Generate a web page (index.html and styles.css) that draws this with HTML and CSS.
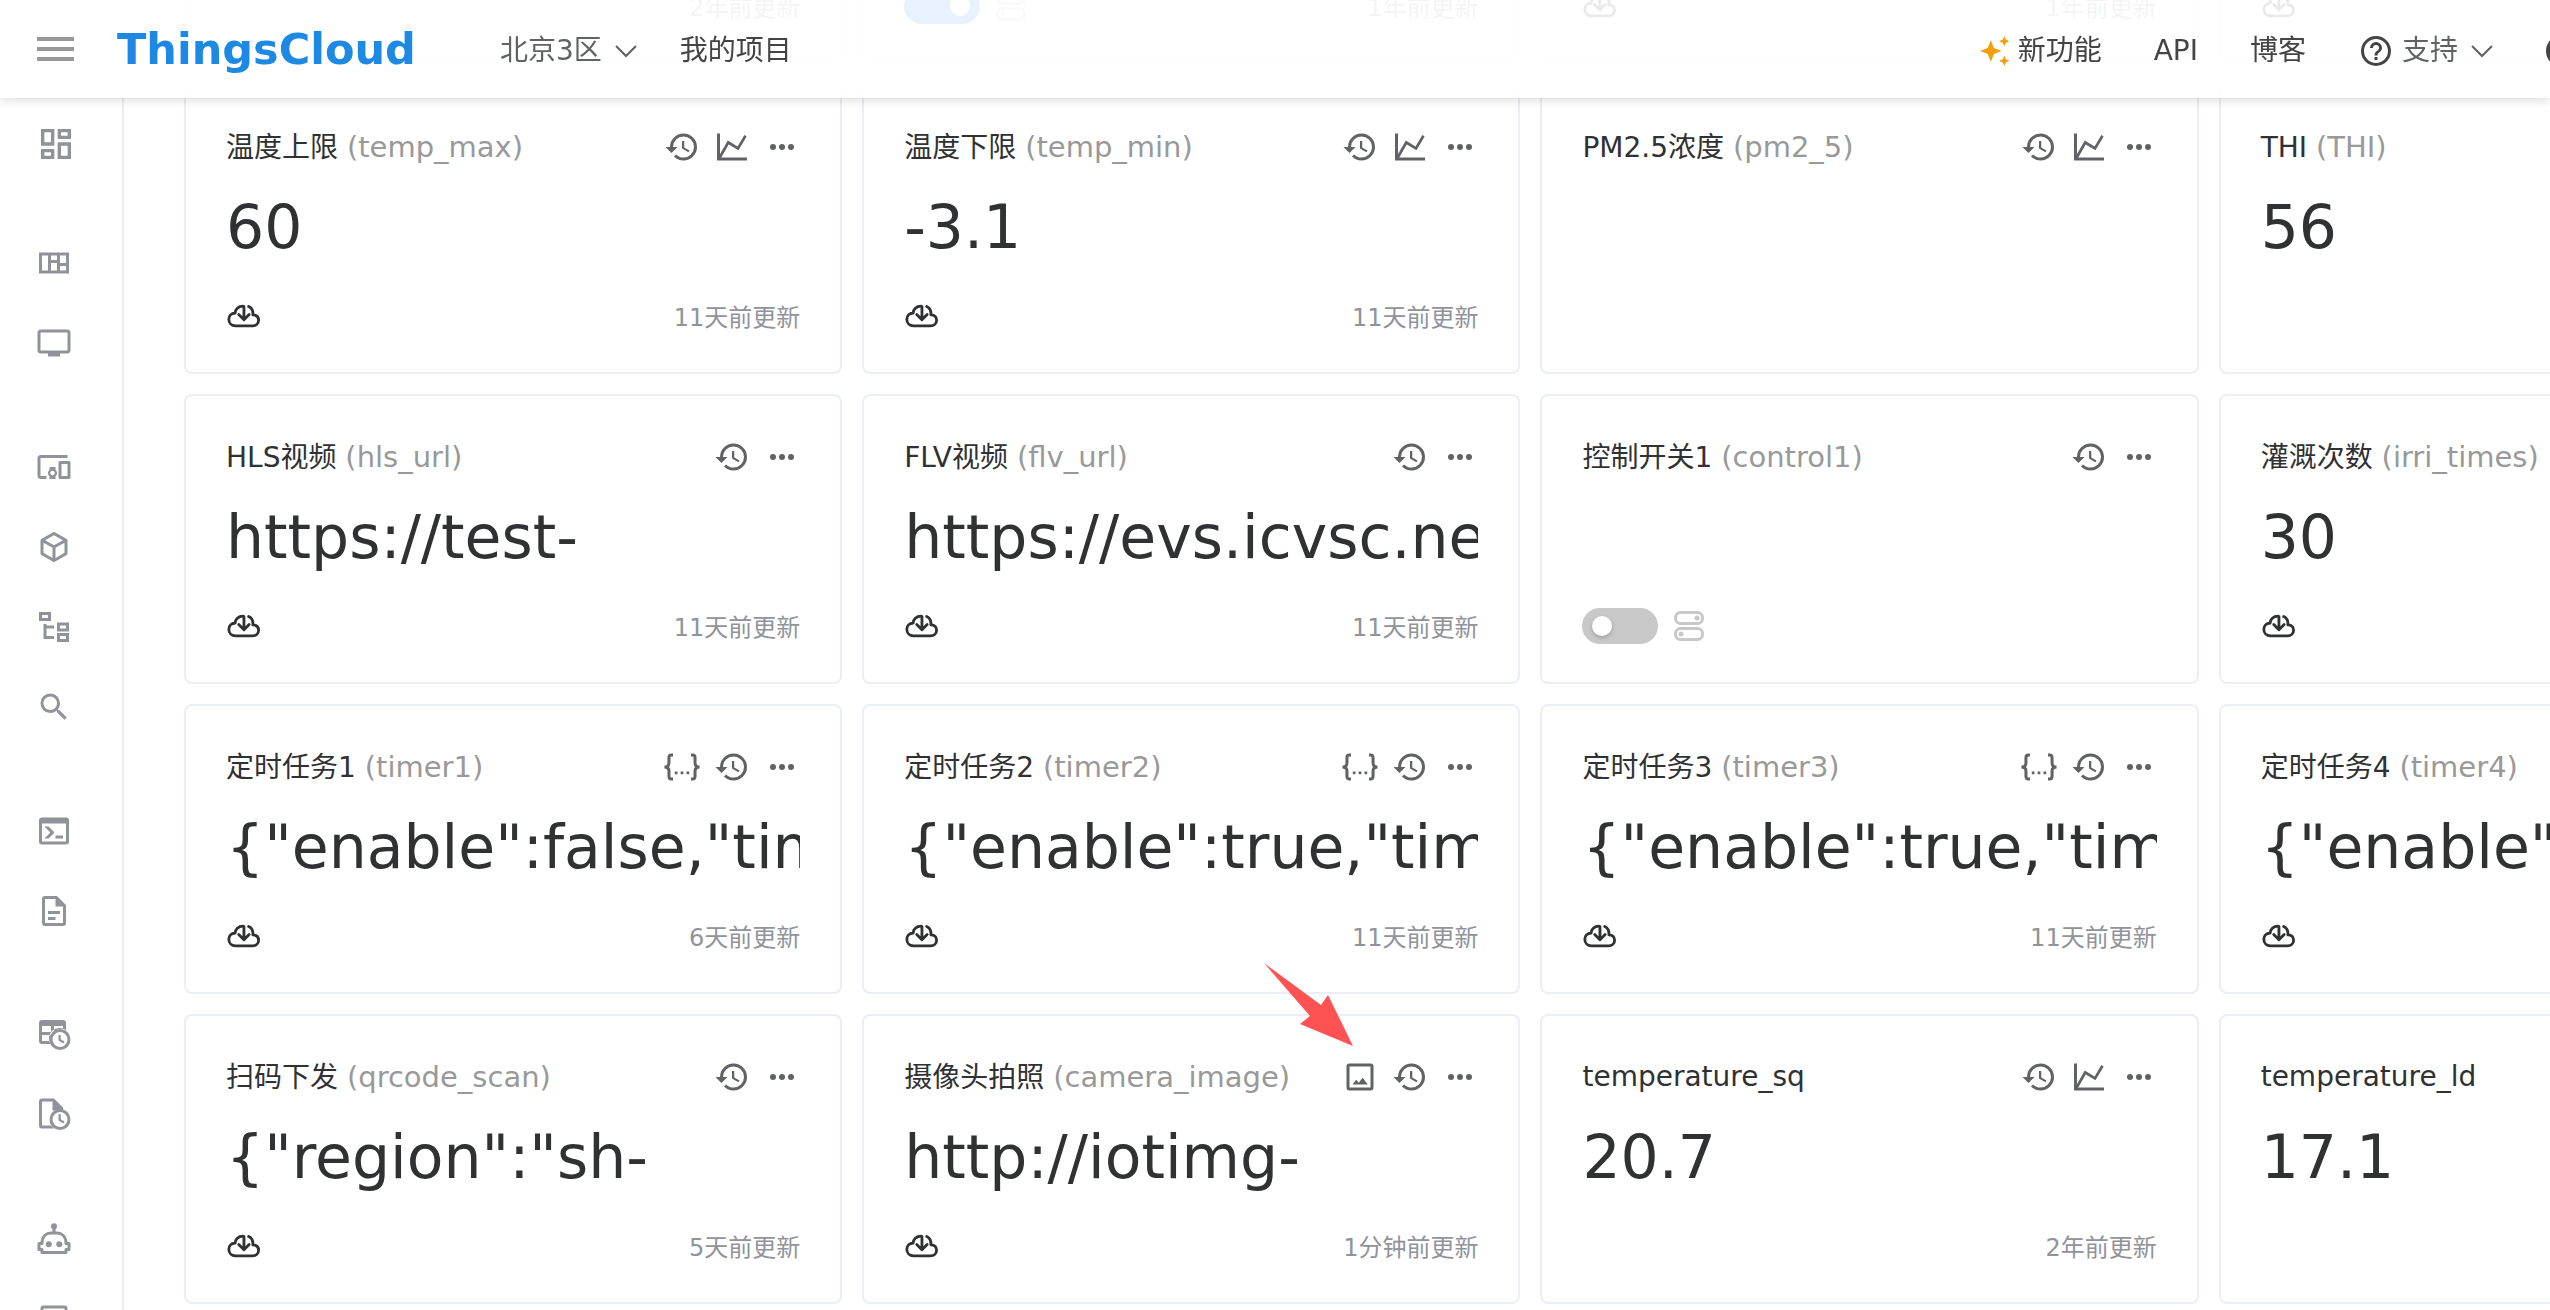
FILE: index.html
```html
<!DOCTYPE html>
<html lang="zh-CN">

<head>
    <meta charset="utf-8">
    <title>ThingsCloud</title>
    <link rel="stylesheet" href="styles.css">
</head>

<body>
    <!-- icon sprite -->
    <svg class="sprite" aria-hidden="true">
        <symbol id="i-history" viewBox="0 0 24 24"><path d="M13.5 8H12v5l4.28 2.54.72-1.21-3.5-2.08V8M13 3a9 9 0 0 0-9 9H1l3.96 4.03L9 12H6a7 7 0 0 1 7-7 7 7 0 0 1 7 7 7 7 0 0 1-7 7c-1.93 0-3.68-.79-4.94-2.06l-1.42 1.42A8.896 8.896 0 0 0 13 21a9 9 0 0 0 9-9 9 9 0 0 0-9-9"/></symbol>
        <symbol id="i-chart" viewBox="0 0 24 24"><path d="M3 3v17H22" fill="none" stroke="currentColor" stroke-width="2"/><path d="M3.500 19.500 9.500 9l6.500 4L21 4.500" fill="none" stroke="currentColor" stroke-width="1.800"/></symbol>
        <symbol id="i-more" viewBox="0 0 24 24"><circle cx="6" cy="12" r="2"/><circle cx="12" cy="12" r="2"/><circle cx="18" cy="12" r="2"/></symbol>
        <symbol id="i-image" viewBox="0 0 24 24"><path d="M19 19H5V5h14m0-2H5a2 2 0 0 0-2 2v14a2 2 0 0 0 2 2h14a2 2 0 0 0 2-2V5a2 2 0 0 0-2-2M7 17l2.400-3.200 1.700 2.100 2.700-3.400L17.200 17z"/></symbol>
        <symbol id="i-json" viewBox="0 0 24 24"><g fill="none" stroke="currentColor" stroke-width="2"><path d="M6 4H5C3.800 4 3.300 4.700 3.300 5.800v3.500C3.300 11 2.500 12 .3 12c2.200 0 3 1 3 2.700v3.500C3.300 19.300 3.800 20 5 20h1M18 4h1c1.200 0 1.700.7 1.700 1.800v3.500c0 1.700.8 2.700 3 2.700-2.200 0-3 1-3 2.700v3.500c0 1.100-.5 1.800-1.700 1.800h-1"/></g><path d="M7.200 15H9v1.800H7.200zM11.100 15h1.800v1.800h-1.800zM15 15h1.800v1.800H15z"/></symbol>
        <symbol id="i-cloud" viewBox="-1 0 36 26"><g fill="none" stroke="currentColor" stroke-width="3" stroke-linecap="round" stroke-linejoin="round"><path d="M17 2.500C12 2.500 8.700 6 8.700 9.800 4.500 10 2 13 2 16.500 2 20.500 5 23.500 9 23.500h18c3.800 0 6.500-2.500 6.500-6 0-3.300-2.300-5.500-6-5.700.3-4-1.500-7.500-4.500-8.800"/><path d="M18 3v13M12.500 11.500 18 17l5.500-5.500"/></g></symbol>
        <symbol id="i-switch" viewBox="0 0 30 30"><g fill="none" stroke="currentColor" stroke-width="3"><rect x="1.500" y="1.500" width="27" height="11" rx="5"/><rect x="1.500" y="17.500" width="27" height="11" rx="5"/></g><circle cx="23" cy="7" r="2.500"/><circle cx="7" cy="23" r="2.500"/></symbol>
        <symbol id="i-chevron" viewBox="0 0 24 24"><path d="M2 7l10 10L22 7" fill="none" stroke="currentColor" stroke-width="2"/></symbol>
        <symbol id="i-help" viewBox="0 0 24 24"><path d="M11 18h2v-2h-2v2m1-16A10 10 0 0 0 2 12a10 10 0 0 0 10 10 10 10 0 0 0 10-10A10 10 0 0 0 12 2m0 18c-4.410 0-8-3.590-8-8s3.590-8 8-8 8 3.590 8 8-3.590 8-8 8m0-14a4 4 0 0 0-4 4h2a2 2 0 0 1 2-2 2 2 0 0 1 2 2c0 2-3 1.750-3 5h2c0-2.250 3-2.500 3-5a4 4 0 0 0-4-4z"/></symbol>
        <symbol id="i-spark" viewBox="0 0 29 29"><path d="M10.500 4l3 7.500 7.500 3-7.500 3-3 7.500-3-7.500-7.500-3 7.500-3zM23.500 0l1.500 3.500L28.500 5 25 6.500 23.500 10 22 6.500 18.500 5 22 3.500zM23.500 19l1.500 3.500 3.500 1.500-3.500 1.500-1.500 3.500-1.500-3.500-3.500-1.500 3.500-1.500z"/></symbol>
        <symbol id="i-dashboard" viewBox="0 0 24 24"><path d="M19 5v2h-4V5h4M9 5v6H5V5h4m10 8v6h-4v-6h4M9 17v2H5v-2h4M21 3h-8v6h8V3zM11 3H3v10h8V3zm10 8h-8v10h8V11zm-10 4H3v6h8v-6z"/></symbol>
        <symbol id="i-quilt" viewBox="0 0 24 24"><path d="M3 6h18v12H3zM9 6v12M15 6v12M9 11h6M15 13h6" fill="none" stroke="currentColor" stroke-width="2"/></symbol>
        <symbol id="i-screen" viewBox="0 0 24 24"><path d="M21 3H3c-1.100 0-2 .9-2 2v12c0 1.100.9 2 2 2h5v2h8v-2h5c1.100 0 2-.9 2-2V5c0-1.100-.9-2-2-2zm0 14H3V5h18v12z"/></symbol>
        <symbol id="i-devices" viewBox="0 0 24 24"><path d="M3 6h18V4H3c-1.100 0-2 .9-2 2v12c0 1.100.9 2 2 2h4v-2H3V6zm10 6H9v1.780c-.61.55-1 1.330-1 2.220s.39 1.670 1 2.220V20h4v-1.780c.61-.55 1-1.340 1-2.220s-.39-1.670-1-2.220V12zm-2 5.500c-.83 0-1.500-.67-1.500-1.500s.67-1.500 1.500-1.500 1.500.67 1.500 1.500-.67 1.500-1.500 1.500zM22 8h-6c-.5 0-1 .5-1 1v10c0 .5.5 1 1 1h6c.5 0 1-.5 1-1V9c0-.5-.5-1-1-1zm-1 10h-4v-8h4v8z"/></symbol>
        <symbol id="i-cube" viewBox="0 0 24 24"><path d="M21 16.500c0 .38-.21.71-.53.88l-7.900 4.440c-.16.12-.36.18-.57.18s-.41-.06-.57-.18l-7.900-4.440A.991.991 0 0 1 3 16.500v-9c0-.38.21-.71.53-.88l7.900-4.440c.16-.12.36-.18.57-.18s.41.06.57.18l7.900 4.440c.32.17.53.5.53.88v9M12 4.150 6.040 7.500 12 10.850l5.960-3.350L12 4.150M5 15.910l6 3.380v-6.710L5 9.210v6.700m14 0v-6.700l-6 3.370v6.710l6-3.380z"/></symbol>
        <symbol id="i-tree" viewBox="0 0 24 24"><path d="M3 3h6v4H3zM15 10h6v4h-6zM15 17h6v4h-6zM6 10v9h6M6 12h6" fill="none" stroke="currentColor" stroke-width="2"/></symbol>
        <symbol id="i-search" viewBox="0 0 24 24"><path d="M9.500 3A6.500 6.500 0 0 1 16 9.500c0 1.610-.59 3.090-1.560 4.230l.27.27h.79l5 5-1.500 1.500-5-5v-.79l-.27-.27A6.516 6.516 0 0 1 9.500 16 6.500 6.500 0 0 1 3 9.500 6.500 6.500 0 0 1 9.500 3m0 2C7 5 5 7 5 9.500S7 14 9.500 14 14 12 14 9.500 12 5 9.500 5z"/></symbol>
        <symbol id="i-console" viewBox="0 0 24 24"><path d="M20 19V7H4v12h16m0-16a2 2 0 0 1 2 2v14a2 2 0 0 1-2 2H4a2 2 0 0 1-2-2V5c0-1.110.9-2 2-2h16m-7 14v-2h5v2h-5m-3.420-4L5.570 9H8.400l3.300 3.300c.39.39.39 1.030 0 1.420L8.420 17H5.590l3.990-4z"/></symbol>
        <symbol id="i-doc" viewBox="0 0 24 24"><path d="M6 2a2 2 0 0 0-2 2v16a2 2 0 0 0 2 2h12a2 2 0 0 0 2-2V8l-6-6H6m0 2h7v5h5v11H6V4m2 8v2h8v-2H8m0 4v2h5v-2H8z"/></symbol>
        <symbol id="i-table-clock" viewBox="0 0 24 24"><path d="M4 2h14a2 2 0 0 1 2 2v4.800A7 7 0 0 0 9.700 18H4a2 2 0 0 1-2-2V4a2 2 0 0 1 2-2m0 4v4h6V6H4m8 0v3.700A7 7 0 0 1 16 8h2V6h-6M4 12v4h5.100A7 7 0 0 1 10.300 12H4z"/><circle cx="16" cy="15" r="6" fill="none" stroke="currentColor" stroke-width="2"/><path d="M15 12h1.500v2.900l2.500 1.500-.7 1.300-3.300-2z"/></symbol>
        <symbol id="i-file-clock" viewBox="0 0 24 24"><path d="M4 1h8l6 6v2h-7V3H4v16h6l2 2H4a2 2 0 0 1-2-2V3a2 2 0 0 1 2-2z"/><circle cx="16" cy="15" r="6" fill="none" stroke="currentColor" stroke-width="2"/><path d="M15 11.500h1.500v3.400l2.500 1.500-.7 1.300-3.300-2z"/></symbol>
        <symbol id="i-robot" viewBox="0 0 24 24"><path d="M4 15c0-5 3-7 6-7h4c3 0 6 2 6 7h2v4h-2v2H4v-2H2v-4zM12 4v4" fill="none" stroke="currentColor" stroke-width="2" stroke-linejoin="round"/><circle cx="12" cy="3.500" r="2"/><circle cx="8.500" cy="15.500" r="2"/><circle cx="15.500" cy="15.500" r="2"/></symbol>
        <symbol id="i-box" viewBox="0 0 24 24"><rect x="4" y="4" width="16" height="16" rx="1" fill="none" stroke="currentColor" stroke-width="2"/></symbol>
    </svg>

    <header class="topbar">
        <button class="menu-btn" aria-label="菜单"><span></span><span></span><span></span></button>
        <a class="logo" href="#">ThingsCloud</a>
        <nav class="nav-left">
            <button class="nav-drop">北京3区 <svg class="chevron"><use href="#i-chevron"/></svg></button>
            <a href="#">我的项目</a>
        </nav>
        <nav class="nav-right">
            <a class="new" href="#"><svg class="spark"><use href="#i-spark"/></svg>新功能</a>
            <a href="#">API</a>
            <a href="#">博客</a>
            <button class="nav-drop"><span class="support"><svg class="help"><use href="#i-help"/></svg>支持</span> <svg class="chevron"><use href="#i-chevron"/></svg></button>
            <button class="avatar" aria-label="账号"></button>
        </nav>
    </header>

    <div class="page">
        <aside class="sidebar">
            <nav class="group first">
                <a href="#" aria-label="概览"><svg><use href="#i-dashboard"/></svg></a>
            </nav>
            <nav class="group">
                <a href="#" aria-label="看板"><svg><use href="#i-quilt"/></svg></a>
                <a href="#" aria-label="大屏"><svg><use href="#i-screen"/></svg></a>
            </nav>
            <nav class="group">
                <a href="#" aria-label="设备"><svg><use href="#i-devices"/></svg></a>
                <a href="#" aria-label="设备类型"><svg><use href="#i-cube"/></svg></a>
                <a href="#" aria-label="设备组"><svg><use href="#i-tree"/></svg></a>
                <a href="#" aria-label="搜索"><svg><use href="#i-search"/></svg></a>
            </nav>
            <nav class="group">
                <a href="#" aria-label="调试"><svg><use href="#i-console"/></svg></a>
                <a href="#" aria-label="日志"><svg><use href="#i-doc"/></svg></a>
            </nav>
            <nav class="group">
                <a href="#" aria-label="历史数据"><svg><use href="#i-table-clock"/></svg></a>
                <a href="#" aria-label="历史文件"><svg><use href="#i-file-clock"/></svg></a>
            </nav>
            <nav class="group">
                <a href="#" aria-label="规则"><svg><use href="#i-robot"/></svg></a>
                <a href="#" aria-label="应用"><svg><use href="#i-box"/></svg></a>
            </nav>
        </aside>

        <main class="cards" id="cards"></main>
    </div>

    <script src="script.js"></script>
</body>

</html>
```

FILE: styles.css
```css
* {
    box-sizing: border-box;
}

body {
    margin: 0;
    height: 100vh;
    overflow: hidden;
    background: #fff;
    color: #303133;
    font-family: Verdana, "DejaVu Sans", "Noto Sans CJK SC", sans-serif;
    font-size: 28px;
    line-height: 42px;
}

a {
    color: inherit;
    text-decoration: none;
}

button {
    padding: 0;
    border: none;
    background: none;
    color: inherit;
    font: inherit;
    cursor: pointer;
}

svg {
    display: block;
    flex: none;
    fill: currentColor;
}

.sprite {
    position: absolute;
    width: 0;
    height: 0;
}

/* top bar, floats over the scrolled cards */
.topbar {
    position: fixed;
    top: 0;
    left: 0;
    right: 0;
    z-index: 10;
    display: flex;
    align-items: center;
    height: 98px;
    padding-left: 37px;
    clip-path: inset(0 0 -20px 0);
    background: rgba(255, 255, 255, 0.9);
    box-shadow: 0 0 12px rgba(0, 0, 0, 0.2);
    color: #444;
}

.menu-btn {
    display: flex;
    flex-direction: column;
    gap: 6px;
    width: 37px;
}

.menu-btn span {
    height: 4px;
    background: #999;
}

.logo {
    margin-left: 43px;
    color: #1e88e5;
    font-size: 43px;
    font-weight: bold;
}

.nav-left,
.nav-right {
    display: flex;
    align-items: center;
    padding-top: 3px;
    white-space: nowrap;
}

.nav-left {
    gap: 42px;
    margin-left: 84px;
}

.nav-right {
    gap: 52px;
    margin-left: auto;
    margin-right: -28px;
}

.nav-drop,
.new,
.support {
    display: flex;
    align-items: center;
}

.nav-drop {
    gap: 12px;
    color: #606266;
}

.new,
.support {
    gap: 8px;
}

.chevron {
    width: 24px;
    height: 24px;
}

.spark {
    width: 30px;
    height: 30px;
    color: #f59e0b;
}

.help {
    width: 36px;
    height: 36px;
    color: #444;
}

.avatar {
    width: 32px;
    height: 32px;
    border: 4px solid #444;
    border-radius: 50%;
}

.page {
    display: flex;
    height: 100%;
}

.sidebar {
    flex: none;
    display: flex;
    flex-direction: column;
    gap: 44px;
    width: 124px;
    padding-top: 109px;
    border-right: 2px solid #ebeef5;
    color: #909399;
}

.group a {
    display: flex;
    align-items: center;
    height: 80px;
    padding-left: 36px;
}

.group svg {
    width: 36px;
    height: 36px;
}

.first a {
    height: 70px;
}

.first svg {
    width: 40px;
    height: 40px;
}

/* cards, the last column runs past the window edge */
.cards {
    flex: 1;
    min-width: 0;
    display: grid;
    grid-template-columns: repeat(4, 27.82%);
    grid-auto-rows: 290px;
    align-content: start;
    gap: 20px;
    margin-top: -226px;
    margin-left: 60px;
}

.card {
    position: relative;
    display: flex;
    flex-direction: column;
    min-width: 0;
    padding: 40px;
    border: 2px solid #ebeef5;
    border-radius: 8px;
    background: #fff;
}

.card-head {
    display: flex;
    align-items: center;
    justify-content: space-between;
    height: 42px;
    white-space: nowrap;
}

.card-title {
    margin: 0;
    font-size: 28px;
    font-weight: normal;
}

.card-title span {
    color: #999;
    font-size: 29px;
}

.card-tools {
    display: flex;
    gap: 14px;
    color: #606266;
}

.card-tools svg {
    width: 36px;
    height: 36px;
}

.card-value {
    height: 80px;
    margin-top: 19px;
    overflow: hidden;
    font-size: 60px;
    line-height: 80px;
    white-space: nowrap;
}

.card-foot {
    display: flex;
    align-items: center;
    gap: 16px;
    height: 32px;
    margin-top: auto;
}

.cloud {
    width: 34px;
    height: 26px;
}

.card-foot time {
    margin-left: auto;
    padding-top: 3px;
    color: #909399;
    font-size: 24px;
}

.toggle {
    appearance: none;
    display: flex;
    align-items: center;
    width: 76px;
    height: 36px;
    margin: 0;
    padding: 0 10px;
    border-radius: 18px;
    background: #c8c8c8;
}

.toggle::before {
    content: "";
    width: 20px;
    height: 20px;
    border-radius: 50%;
    background: #fff;
    box-shadow: 0 2px 4px rgba(0, 0, 0, 0.2);
}

.toggle:checked {
    justify-content: flex-end;
    background: #1677ff;
}

.switches {
    width: 30px;
    height: 30px;
    color: #c8c8c8;
}

/* red pointer lying over the camera card */
.pointer {
    position: absolute;
    top: -53px;
    right: 164px;
    width: 90px;
    height: 84px;
    color: #ff5252;
}
```

FILE: script.js
```js
const cards = [
    { name: '', key: '', tools: [], time: '2年前更新' },
    { name: '', key: '', tools: [], toggle: true, on: true, time: '1年前更新' },
    { name: '', key: '', tools: [], cloud: true, time: '1年前更新' },
    { name: '', key: '', tools: [], cloud: true },

    { name: '温度上限', key: 'temp_max', tools: ['history', 'chart', 'more'], value: '60', cloud: true, time: '11天前更新' },
    { name: '温度下限', key: 'temp_min', tools: ['history', 'chart', 'more'], value: '-3.1', cloud: true, time: '11天前更新' },
    { name: 'PM2.5浓度', key: 'pm2_5', tools: ['history', 'chart', 'more'] },
    { name: 'THI', key: 'THI', tools: [], value: '56' },

    { name: 'HLS视频', key: 'hls_url', tools: ['history', 'more'], value: 'https://test-', cloud: true, time: '11天前更新' },
    { name: 'FLV视频', key: 'flv_url', tools: ['history', 'more'], value: 'https://evs.icvsc.net', cloud: true, time: '11天前更新' },
    { name: '控制开关1', key: 'control1', tools: ['history', 'more'], toggle: true },
    { name: '灌溉次数', key: 'irri_times', tools: [], value: '30', cloud: true },

    { name: '定时任务1', key: 'timer1', tools: ['json', 'history', 'more'], value: '{"enable":false,"tim', cloud: true, time: '6天前更新' },
    { name: '定时任务2', key: 'timer2', tools: ['json', 'history', 'more'], value: '{"enable":true,"time', cloud: true, time: '11天前更新' },
    { name: '定时任务3', key: 'timer3', tools: ['json', 'history', 'more'], value: '{"enable":true,"time', cloud: true, time: '11天前更新' },
    { name: '定时任务4', key: 'timer4', tools: [], value: '{"enable":true,"time', cloud: true },

    { name: '扫码下发', key: 'qrcode_scan', tools: ['history', 'more'], value: '{"region":"sh-', cloud: true, time: '5天前更新' },
    { name: '摄像头拍照', key: 'camera_image', tools: ['image', 'history', 'more'], value: 'http://iotimg-', cloud: true, time: '1分钟前更新', pointer: true },
    { name: 'temperature_sq', key: '', tools: ['history', 'chart', 'more'], value: '20.7', time: '2年前更新' },
    { name: 'temperature_ld', key: '', tools: [], value: '17.1' }
];

const labels = { history: '历史', chart: '图表', more: '更多', json: 'JSON', image: '图片' };

const icon = (name, cls = '') => `<svg class="${cls}"><use href="#i-${name}"/></svg>`;

const renderCard = (card) => `
    <section class="card">
        <div class="card-head">
            <h3 class="card-title">${card.name}${card.key ? ` <span>(${card.key})</span>` : ''}</h3>
            <div class="card-tools">
                ${card.tools.map((t) => `<button aria-label="${labels[t]}">${icon(t)}</button>`).join('')}
            </div>
        </div>
        ${card.value ? `<div class="card-value">${card.value}</div>` : ''}
        <div class="card-foot">
            ${card.cloud ? icon('cloud', 'cloud') : ''}
            ${card.toggle ? `<input class="toggle" type="checkbox" aria-label="开关" ${card.on ? 'checked' : ''}>${icon('switch', 'switches')}` : ''}
            ${card.time ? `<time>${card.time}</time>` : ''}
        </div>
        ${card.pointer ? '<svg class="pointer" viewBox="0 0 90 84"><path d="M0 0 57 42 64 32 89 83 36 61 46 53z"/></svg>' : ''}
    </section>`;

document.getElementById('cards').innerHTML = cards.map(renderCard).join('');
```
